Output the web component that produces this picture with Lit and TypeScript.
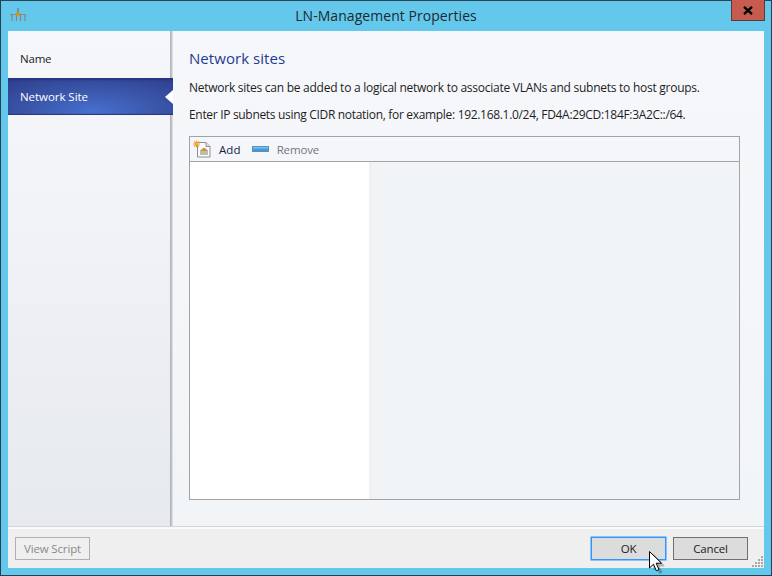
import { LitElement, html, css } from "lit";
import { customElement } from "lit/decorators.js";

@customElement("app-root")
export class AppRoot extends LitElement {
  static styles = css`
    :host {
      display: block;
      width: 772px;
      height: 576px;
      font-family: "Open Sans", "Noto Sans", sans-serif;
      font-size: 12px;
      color: #1a1a1a;
    }
    * { box-sizing: border-box; }
    .window {
      position: relative;
      width: 772px;
      height: 576px;
      background: #64c8ec;
      border: 1px solid #24404f;
      border-top-color: #2a4452;
      padding: 0 7px 7px;
      display: flex;
      flex-direction: column;
    }
    .titlebar {
      height: 30px;
      flex: none;
      display: grid;
      grid-template-columns: 1fr auto 1fr;
      align-items: start;
    }
    .app-icon { margin: 7px 0 0 1px; display: block; }
    .title {
      font-size: 14px;
      line-height: 29px;
      letter-spacing: 0.05px;
      color: #1c2a30;
    }
    .close {
      justify-self: end;
      width: 34px;
      height: 21px;
      margin-top: -1px;
      margin-right: -1px;
      background: #c75b50;
      border: 1px solid #5e3a3c;
      border-top: none;
      display: flex;
      align-items: center;
      justify-content: center;
    }
    .body {
      flex: 1;
      min-height: 0;
      display: flex;
      background: #f5f6fa;
    }
    .side {
      width: 162px;
      flex: none;
      padding-top: 8px;
      background: linear-gradient(#f6f7fb 0%, #f1f3f7 35%, #e6e9ee 100%);
      display: flex;
      flex-direction: column;
    }
    .nav {
      height: 39px;
      flex: none;
      padding-left: 12px;
      display: flex;
      align-items: center;
      letter-spacing: -0.2px;
      font-size: 11.5px;
    }
    .nav.active {
      position: relative;
      z-index: 1;
      color: #fff;
      height: 37px;
      margin-right: -3px;
      letter-spacing: -0.05px;
      background: radial-gradient(ellipse 75% 110% at 52% 90%, #4670cf 0%, #3a55a8 55%, #2f4090 100%);
      box-shadow: inset 0 3px 2px -1px #28347f, inset 0 -2px 1px -1px #28347f;
    }
    .nav.active::after {
      content: "";
      position: absolute;
      right: 0;
      top: 12px;
      border-style: solid;
      border-width: 7px 8px 7px 0;
      border-color: transparent #fff transparent transparent;
    }
    .divider {
      width: 3px;
      flex: none;
      background: linear-gradient(90deg, #a9adb0, #c9cccf 60%, #e6e8ea);
    }
    .main {
      flex: 1;
      min-width: 0;
      padding: 17px 24px 27px 16px;
      display: flex;
      flex-direction: column;
      background: linear-gradient(#f6f7fb, #f2f5f8);
    }
    h1 {
      margin: 0;
      font-size: 15px;
      line-height: 20px;
      font-weight: 400;
      color: #1f3d8f;
      letter-spacing: 0.05px;
    }
    p {
      margin: 0;
      line-height: 16px;
      font-size: 12px;
      letter-spacing: -0.26px;
      white-space: nowrap;
      color: #1d1d1d;
    }
    .p1 { margin-top: 12px; }
    .p2 { margin-top: 11px; letter-spacing: -0.315px; }
    .box {
      margin-top: 13px;
      flex: 1;
      min-height: 0;
      border: 1px solid #a3a3a3;
      display: flex;
      flex-direction: column;
      background: #fff;
    }
    .toolbar {
      height: 25px;
      flex: none;
      background: #f5f6fa;
      border-bottom: 1px solid #a3a3a3;
      display: flex;
      align-items: center;
      padding-left: 3px;
      font-size: 11.5px;
      letter-spacing: -0.15px;
    }
    .add-label { margin-left: 6px; color: #15233d; letter-spacing: 0.1px; }
    .remove-icon { margin-left: 11px; display: block; }
    .remove-label { margin-left: 8px; color: #70777f; }
    .panes { flex: 1; min-height: 0; display: flex; }
    .left { width: 179px; flex: none; background: #fff; }
    .sep { width: 3px; flex: none; background: #eef0f1; }
    .right { flex: 1; background: #f1f4f7; }
    .footer {
      height: 41px;
      flex: none;
      background: #efefef;
      border-top: 2px solid #fafafa;
      box-shadow: 0 -1px 0 #d4d6d8;
      display: flex;
      align-items: center;
      padding: 0 16px 0 7px;
    }
    .btn {
      width: 75px;
      height: 23px;
      display: flex;
      align-items: center;
      justify-content: center;
      background: #dcdcdc;
      border: 1px solid #707070;
      font-size: 11.5px;
      letter-spacing: -0.15px;
      color: #222;
    }
    .btn.disabled {
      background: #efefef;
      border-color: #b0b0b0;
      color: #8a8a8a;
    }
    .btn.ok {
      margin-left: auto;
      border-color: #2f96ff;
      box-shadow: 0 0 0 0.5px #2f96ff;
    }
    .btn.cancel { margin-left: 7px; }
    .grip { position: absolute; right: 7px; bottom: 7px; display: block; }
    .cursor { position: absolute; left: 648px; top: 550px; display: block; }
  `;

  render() {
    return html`
      <div class="window">
        <div class="titlebar">
          <svg class="app-icon" width="18" height="14" viewBox="0 0 18 14">
            <path d="M9 0v5" stroke="#6a6a62" stroke-width="1"/>
            <path d="M1 6.5h16" stroke="#8a8a80" stroke-width="1"/>
            <path d="M3 6.5V13M7.5 6.5V13M11.5 6.5V13M16 6.5V13" stroke="#85857f" stroke-width="1.2"/>
            <rect x="7" y="4.5" width="4" height="3" fill="#d8930f"/>
          </svg>
          <div class="title">LN-Management Properties</div>
          <div class="close">
            <svg width="10" height="9" viewBox="0 0 10 9">
              <path d="M1 .8L9 8.2M9 .8L1 8.2" stroke="#000" stroke-width="2.3"/>
            </svg>
          </div>
        </div>
        <div class="body">
          <div class="side">
            <div class="nav">Name</div>
            <div class="nav active">Network Site</div>
          </div>
          <div class="divider"></div>
          <div class="main">
            <h1>Network sites</h1>
            <p class="p1">Network sites can be added to a logical network to associate VLANs and subnets to host groups.</p>
            <p class="p2">Enter IP subnets using CIDR notation, for example: 192.168.1.0/24, FD4A:29CD:184F:3A2C::/64.</p>
            <div class="box">
              <div class="toolbar">
                <svg width="20" height="18" viewBox="0 0 20 18">
                  <path d="M4.5 2.5H13l4 4v10.5H4.5z" fill="#fbfbfb" stroke="#8d8d8d"/>
                  <path d="M13 2.5v4h4" fill="#e4e4e4" stroke="#8d8d8d"/>
                  <path d="M8 10h6M8 10v5M10 10v5M12 10v5M14 10v5" stroke="#8a7a5a"/>
                  <rect x="9.5" y="8" width="3" height="2.5" fill="#d8930f"/>
                  <path d="M3.5 .5v7M0 4h7M1 1.5l5 5M6 1.5l-5 5" stroke="#f2a63a" stroke-width="1.2"/>
                </svg>
                <span class="add-label">Add</span>
                <svg class="remove-icon" width="17" height="6" viewBox="0 0 17 6">
                  <rect x=".5" y=".5" width="16" height="5" fill="#3d9ade" stroke="#5f8fb5"/>
                  <rect x="1" y="1" width="15" height="1.5" fill="#7cc0ee"/>
                </svg>
                <span class="remove-label">Remove</span>
              </div>
              <div class="panes">
                <div class="left"></div>
                <div class="sep"></div>
                <div class="right"></div>
              </div>
            </div>
          </div>
        </div>
        <div class="footer">
          <div class="btn disabled">View Script</div>
          <div class="btn ok">OK</div>
          <div class="btn cancel">Cancel</div>
        </div>
        <svg class="grip" width="13" height="13" viewBox="0 0 13 13" fill="#a9a9a9">
          <rect x="10" y="1" width="2" height="2"/>
          <rect x="7" y="4" width="2" height="2"/><rect x="10" y="4" width="2" height="2"/>
          <rect x="4" y="7" width="2" height="2"/><rect x="7" y="7" width="2" height="2"/><rect x="10" y="7" width="2" height="2"/>
          <rect x="1" y="10" width="2" height="2"/><rect x="4" y="10" width="2" height="2"/><rect x="7" y="10" width="2" height="2"/><rect x="10" y="10" width="2" height="2"/>
        </svg>
        <svg class="cursor" width="16" height="24" viewBox="0 0 16 24">
          <path d="M2 2l2 1 10 10.5-.5 1H9l3 6-3 1.5-3-6.5-3 3z" fill="#000" opacity=".25" transform="translate(1.5 1)"/>
          <path d="M.5.5v16.5l4-3.8 2.8 6.6 2.7-1.2-2.8-6.4h5.3z" fill="#fff" stroke="#000" stroke-width="1"/>
        </svg>
      </div>
    `;
  }
}
